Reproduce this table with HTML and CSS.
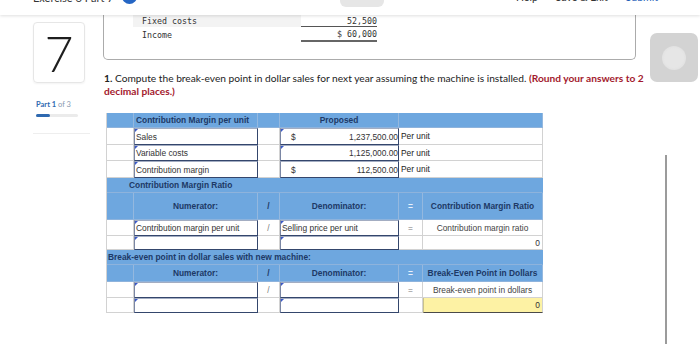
FILE: index.html
```html
<!DOCTYPE html>
<html lang="en">
<head>
<meta charset="utf-8">
<title>Break-even</title>
<link rel="stylesheet" href="styles.css">
</head>
<body>
<header class="topbar">
  <div class="tb-left"><span class="tb-title">Exercise 6 Part 7</span><span class="tb-info"></span></div>
  <div class="tb-pill"></div>
  <nav class="tb-links"><span>Help</span><span>Save &amp; Exit</span><span class="tb-submit">Submit</span></nav>
</header>
<div class="main">
  <aside class="sidebar">
    <div class="qnum">7</div>
    <div class="part"><b>Part 1</b> of 3</div>
    <div class="progress"><div class="progress-fill"></div></div>
    <div class="side-rule"></div>
  </aside>
  <section class="content">
    <div class="card">
      <div class="fin-row shade"><span class="fin-label">Fixed costs</span><span class="fin-val under">52,500</span></div>
      <div class="fin-row"><span class="fin-label">Income</span><span class="fin-val double">$ 60,000</span></div>
    </div>
    <p class="question"><b>1.</b> Compute the break-even point in dollar sales for next year assuming the machine is installed. <strong class="hint">(Round your answers to 2 decimal places.)</strong></p>
    <div class="sheet">
      <div class="c hd"></div>
      <div class="c hd hl">Contribution Margin per unit</div>
      <div class="c hd"></div>
      <div class="c hd hc">Proposed</div>
      <div class="c hd span2"></div>

      <div class="c"></div>
      <div class="c inp">Sales</div>
      <div class="c"></div>
      <div class="c inp num"><span>$</span><span>1,237,500.00</span></div>
      <div class="c span2 unit">Per unit</div>

      <div class="c"></div>
      <div class="c inp">Variable costs</div>
      <div class="c"></div>
      <div class="c inp num"><span></span><span>1,125,000.00</span></div>
      <div class="c span2 unit">Per unit</div>

      <div class="c"></div>
      <div class="c inp">Contribution margin</div>
      <div class="c"></div>
      <div class="c inp num nomark"><span>$</span><span>112,500.00</span></div>
      <div class="c span2 unit">Per unit</div>

      <div class="c hd full sec1">Contribution Margin Ratio</div>

      <div class="c hd"></div>
      <div class="c hd hc">Numerator:</div>
      <div class="c hd hc">/</div>
      <div class="c hd hc">Denominator:</div>
      <div class="c hd hc eq">=</div>
      <div class="c hd hc">Contribution Margin Ratio</div>

      <div class="c"></div>
      <div class="c inp">Contribution margin per unit</div>
      <div class="c cc op">/</div>
      <div class="c inp">Selling price per unit</div>
      <div class="c cc op">=</div>
      <div class="c cc res">Contribution margin ratio</div>

      <div class="c"></div>
      <div class="c inp"></div>
      <div class="c"></div>
      <div class="c inp"></div>
      <div class="c"></div>
      <div class="c zero">0</div>

      <div class="c hd full sec2">Break-even point in dollar sales with new machine:</div>

      <div class="c hd"></div>
      <div class="c hd hc">Numerator:</div>
      <div class="c hd hc">/</div>
      <div class="c hd hc">Denominator:</div>
      <div class="c hd hc eq">=</div>
      <div class="c hd hc">Break-Even Point in Dollars</div>

      <div class="c"></div>
      <div class="c inp"></div>
      <div class="c cc op">/</div>
      <div class="c inp"></div>
      <div class="c cc op">=</div>
      <div class="c cc res">Break-even point in dollars</div>

      <div class="c"></div>
      <div class="c inp"></div>
      <div class="c"></div>
      <div class="c inp"></div>
      <div class="c"></div>
      <div class="c zero yellow">0</div>
    </div>
  </section>
  <div class="rail"><div class="rail-line"></div></div>
</div>
<div class="float-btn"><div class="float-dot"></div></div>
</body>
</html>
```

FILE: styles.css
```css
* { box-sizing: border-box; }
html, body { margin: 0; padding: 0; }
body {
  width: 700px;
  height: 344px;
  overflow: hidden;
  background: #fff;
  font-family: "Lato", "Liberation Sans", sans-serif;
  color: #222;
  position: relative;
}

/* top bar */
.topbar {
  height: 15px;
  background: #fff;
  box-shadow: 0 1px 3px rgba(0, 0, 0, 0.13);
  display: flex;
  align-items: flex-start;
  overflow: hidden;
  position: relative;
  z-index: 2;
}
.tb-left { display: flex; align-items: center; margin-left: 33px; margin-top: -9px; }
.tb-title { font-size: 11px; line-height: 12px; color: #333; white-space: nowrap; }
.tb-info { width: 15px; height: 15px; border-radius: 50%; background: #2566c4; margin-left: 8px; margin-top: -2px; }
.tb-pill { width: 44px; height: 14px; border-radius: 6px; background: #e6e6e6; margin-left: 203px; margin-top: -7px; }
.tb-links { display: flex; gap: 18px; margin-left: auto; margin-right: 42px; margin-top: -9px; font-size: 10.5px; line-height: 12px; color: #333; }
.tb-submit { color: #1f5fb8; }

/* main layout */
.main { display: grid; grid-template-columns: 103px 557px 1fr; }

.sidebar { padding: 7px 0 0 33px; }
.qnum {
  width: 52px;
  height: 61px;
  border: 1px solid #e6e6e6;
  border-radius: 4px;
  box-shadow: 0 1px 2px rgba(0, 0, 0, 0.05);
  display: flex;
  align-items: center;
  justify-content: center;
  font-size: 50px;
  font-weight: 300;
  color: #1e1e1e;
  line-height: 1;
}
.part { margin: 17px 0 0 3px; font-size: 7.5px; line-height: 10px; color: #8798b0; }
.part b { color: #2e69b0; }
.progress { width: 42px; height: 3px; margin: 4px 0 0 3px; background: #ebebeb; border-radius: 2px; }
.progress-fill { width: 14px; height: 3px; background: #2e69b0; border-radius: 2px; }
.side-rule { width: 57px; height: 1px; background: #eeeeee; margin-top: 16px; }

/* card */
.card {
  width: 533px;
  border: 1px solid #ababab;
  border-top: 0;
  border-radius: 0 0 5px 5px;
  padding: 0 0 17px 29px;
  font-family: "DejaVu Sans Mono", "Liberation Mono", monospace;
  font-size: 8.3px;
  color: #333;
}
.fin-row { width: 244px; display: flex; justify-content: space-between; height: 12px; }
.fin-row + .fin-row { height: 15px; }
.fin-row.shade { background: #f3f3f3; }
.fin-label { padding-left: 9px; display: flex; align-items: center; }
.fin-val { width: 76px; display: flex; align-items: center; justify-content: flex-end; background: #fff; }
.fin-val.under { border-bottom: 1px solid #555; }
.fin-val.double { border-bottom: 2px solid #666; }

/* question */
.question { margin: 12px 0 0 1px; width: 556px; font-size: 10.2px; line-height: 13px; color: #222; }
.question b { font-weight: 700; }
.hint { color: #a3192d; font-weight: 700; }

/* sheet */
.sheet {
  margin: 15px 0 0 3px;
  display: grid;
  grid-template-columns: 27px 124px 22px 119px 24px 120px;
  grid-template-rows: 15px 17px 16px 17px 15px 27px 16px 14px 15px 17px 16px 15px;
  width: 436px;
  border-left: 1px solid #d2d2d2;
  font-family: "Liberation Sans", Arial, sans-serif;
  font-size: 8.4px;
}
.c {
  display: flex;
  align-items: center;
  min-width: 0;
  white-space: nowrap;
  overflow: hidden;
  color: #333;
  background: #fff;
  border-right: 1px solid #d2d2d2;
  border-bottom: 1px solid #d2d2d2;
  padding: 0 1px;
}
.span2 { grid-column: span 2; }
.full { grid-column: 1 / -1; }
.hd {
  background: #6ea7df;
  color: #1d3966;
  font-weight: 700;
  border-right-color: #94b8df;
  border-bottom-color: #8eb3dc;
}
.full.hd { border-right-color: #6ea7df; }
.hl { padding-left: 2px; }
.hc { justify-content: center; }
.eq { color: #e9f1fb; }
.sec1 { padding-left: 22px; }
.sec2 { padding-left: 1px; }

.inp {
  position: relative;
  border: 1px solid #34466c;
  border-top-color: #a3adc2;
  border-left-color: #7a86a4;
  padding-left: 1px;
  color: #333;
}
.inp::before {
  content: "";
  position: absolute;
  left: 0;
  top: 0;
  border-style: solid;
  border-width: 3px 3px 0 0;
  border-color: #3a58c8 transparent transparent transparent;
}
.inp.nomark::before { display: none; }
.num { justify-content: space-between; padding: 0 0 0 10px; }
.unit { padding-left: 2px; color: #222; }
.cc { justify-content: center; }
.op { color: #777; }
.res { color: #444; }
.zero { justify-content: flex-end; padding-right: 2px; color: #333; }
.yellow { background: #fdf2a4; border-bottom: 1px solid #4a4a4a; border-left: 1px solid #c9c28a; }

/* right rail */
.rail { padding-left: 5px; }
.rail-line { width: 2px; height: 190px; margin-top: 140px; background: #9b9b9b; }

.float-btn {
  position: absolute;
  left: 650px;
  top: 33px;
  width: 48px;
  height: 49px;
  border-radius: 7px;
  background: #d3d3d3;
  display: flex;
  align-items: center;
  justify-content: center;
}
.float-dot {
  width: 24px;
  height: 24px;
  border-radius: 50%;
  background: radial-gradient(circle, #e6e6e6 55%, #d9d9d9 100%);
}
```
